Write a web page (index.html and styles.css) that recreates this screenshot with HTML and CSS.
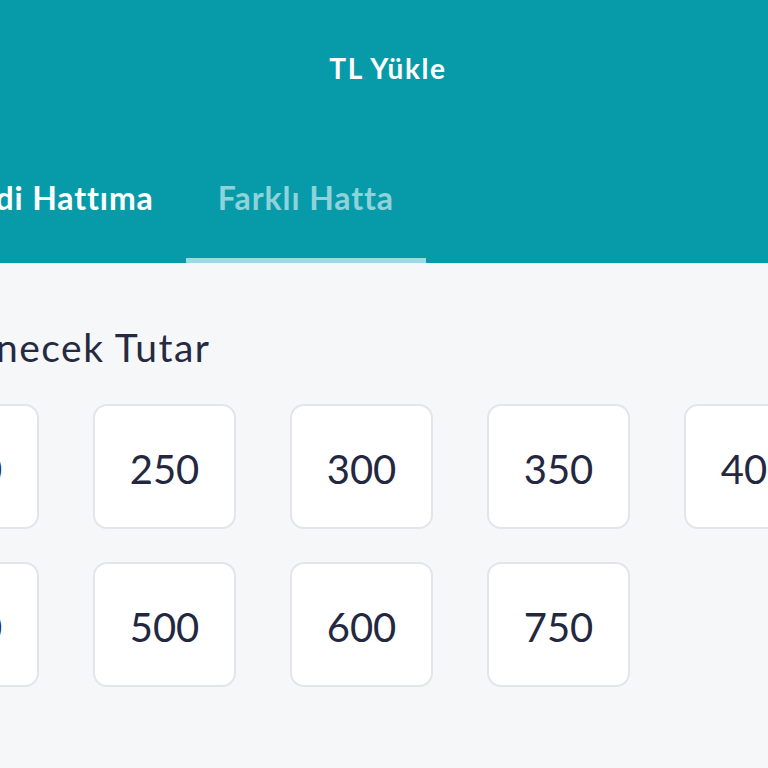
FILE: index.html
```html
<!DOCTYPE html>
<html lang="tr">
<head>
<meta charset="utf-8">
<title>TL Yükle</title>
<link rel="stylesheet" href="styles.css">
</head>
<body>
<div class="app">
  <header class="top">
    <div class="title-bar"><h1 class="title">TL Yükle</h1></div>
    <nav class="tabs">
      <div class="tab tab-own">Kendi Hattıma</div>
      <div class="tab tab-other">Farklı Hatta</div>
    </nav>
  </header>
  <main class="content">
    <h2 class="section-title">Yüklenecek Tutar</h2>
    <div class="amounts">
      <div class="amount">200</div>
      <div class="amount">250</div>
      <div class="amount">300</div>
      <div class="amount">350</div>
      <div class="amount">400</div>
      <div class="amount">450</div>
      <div class="amount">500</div>
      <div class="amount">600</div>
      <div class="amount">750</div>
    </div>
  </main>
</div>
</body>
</html>
```
FILE: styles.css
```css
html, body {
  margin: 0;
  padding: 0;
}
body {
  background: #f6f7f9;
  font-family: Lato, "Noto Sans", "Liberation Sans", sans-serif;
  color: #262a41;
  overflow: hidden;
  width: 768px;
  height: 768px;
}
.app {
  width: 768px;
}
.top {
  background: #079baa;
  height: 263px;
  display: flex;
  flex-direction: column;
}
.title-bar {
  height: 136px;
  display: flex;
  align-items: center;
  justify-content: center;
  padding-left: 8px;
}
.title {
  margin: 0;
  color: #ffffff;
  font-size: 28px;
  font-weight: 700;
  letter-spacing: 1.6px;
  line-height: 1;
}
.tabs {
  display: flex;
  justify-content: flex-end;
  width: 426px;
  height: 127px;
}
.tab {
  flex-shrink: 0;
  box-sizing: border-box;
  height: 127px;
  padding: 42px 32px 0 32px;
  line-height: 40px;
  white-space: nowrap;
  font-size: 32px;
  font-weight: 700;
  letter-spacing: 0.9px;
  border-bottom: 5px solid transparent;
}
.tab-own {
  color: #ffffff;
}
.tab-other {
  color: #8fd2da;
  border-bottom-color: #9fdae1;
}
.content {
  padding-top: 60px;
  margin-left: -104px;
}
.section-title {
  margin: 0 0 33px 0;
  font-size: 39px;
  font-weight: 400;
  line-height: 48px;
  letter-spacing: 1.5px;
  color: #262a41;
  white-space: nowrap;
}
.amounts {
  display: grid;
  grid-template-columns: repeat(5, 143px);
  column-gap: 54px;
  row-gap: 33px;
}
.amount {
  height: 125px;
  box-sizing: border-box;
  padding-top: 4px;
  background: #ffffff;
  border: 2px solid #e3e5ea;
  border-radius: 14px;
  display: flex;
  align-items: center;
  justify-content: center;
  font-size: 40px;
  color: #232840;
}
```
